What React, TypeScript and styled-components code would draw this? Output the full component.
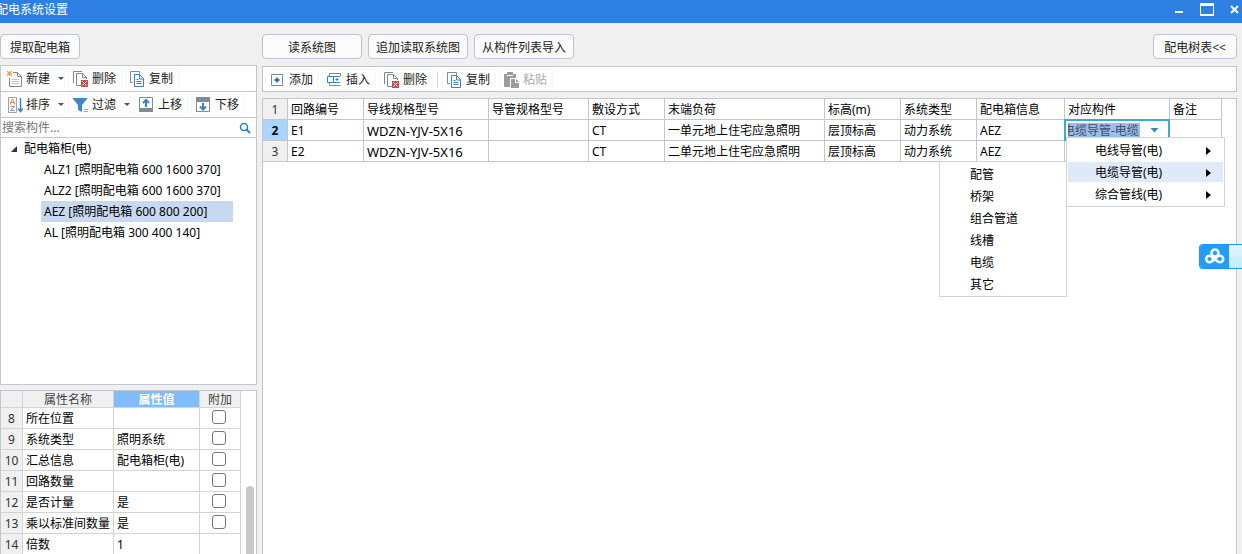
import React from "react";
import styled, { createGlobalStyle, css } from "styled-components";

const line = "#c3c6cc";

const Global = createGlobalStyle`
  * { box-sizing: border-box; }
  body { margin: 0; background: #f0f0f0; }
  body, button, input, table {
    font-family: "Noto Sans", "Noto Sans CJK SC", sans-serif;
    font-size: 12px;
    line-height: 16px;
    color: #000;
  }
`;

const Window = styled.div`
  position: relative;
  display: flex;
  flex-direction: column;
  height: 100vh;
  overflow: hidden;
`;

const TitleBar = styled.header`
  display: flex;
  flex: none;
  justify-content: space-between;
  height: 23px;
  background: #2d80e2;
  color: #fff;
`;

const Title = styled.h1`
  margin: 0;
  font-size: 12px;
  font-weight: 400;
  line-height: 20px;
  text-indent: -4px;
`;

const WindowButtons = styled.div`
  display: flex;
  gap: 8px;
`;

const WindowButton = styled.button`
  width: 20px;
  height: 20px;
  padding: 0;
  border: 0;
  background: none;
  svg { display: block; }
`;

const Body = styled.main`
  display: flex;
  flex: 1;
  gap: 5px;
  min-height: 0;
  padding-right: 5px;
`;

const SideColumn = styled.section`
  display: flex;
  flex: none;
  flex-direction: column;
  width: 257px;
  padding-top: 11px;
`;

const MainColumn = styled.section`
  display: flex;
  flex: 1;
  flex-direction: column;
  min-width: 0;
  padding-top: 11px;
`;

const Actions = styled.div`
  display: flex;
  flex: none;
  gap: 6px;
  height: 25px;
`;

const Spacer = styled.div`
  flex: 1;
`;

const ActionButton = styled.button<{ $width: number }>`
  width: ${(p) => p.$width}px;
  padding: 2px 0 0;
  border: 1px solid #bac4d4;
  border-radius: 4px;
  background: #fbfbfb;
  color: #222;
  white-space: nowrap;
`;

const SidePanel = styled.div`
  display: flex;
  flex: none;
  flex-direction: column;
  height: 320px;
  margin-top: 6px;
  border: 1px solid ${line};
  background: #fff;
`;

const toolRow = css`
  display: flex;
  flex: none;
  align-items: center;
  gap: 3px;
  background: #fff;
`;

const SideTools = styled.div`
  ${toolRow}
  height: 26px;
  padding-left: 1px;
  border-bottom: 1px solid ${line};
`;

const MainTools = styled.div`
  ${toolRow}
  height: 26px;
  margin: 7px 0 6px;
  padding: 2px 0 0 2px;
  border: 1px solid ${line};
`;

const ToolButton = styled.button`
  display: flex;
  align-items: center;
  gap: 3px;
  height: 22px;
  padding: 0 5px 0 4px;
  border: 1px solid #f7f7f7;
  border-radius: 3px;
  background: #fff;
  color: #222;
  white-space: nowrap;
  &:disabled { color: #a9a9a9; }
  svg { flex: none; }
`;

const Caret = styled.span`
  width: 6px;
  height: 3px;
  margin-left: 5px;
  margin-right: -5px;
  background: #555;
  clip-path: polygon(0 0, 100% 0, 50% 100%);
`;

const ToolDivider = styled.span`
  width: 1px;
  height: 16px;
  margin: 0 1px;
  background: #d3d5d9;
`;

const Search = styled.label`
  display: flex;
  flex: none;
  align-items: center;
  height: 20px;
  padding-right: 5px;
  border-bottom: 1px solid ${line};
`;

const SearchInput = styled.input`
  flex: 1;
  min-width: 0;
  padding: 0 0 0 1px;
  border: 0;
  outline: 0;
  background: none;
  &::placeholder { color: #777; opacity: 1; }
`;

const Tree = styled.ul`
  flex: 1;
  margin: 0;
  padding: 0;
  list-style: none;
`;

const TreeGroup = styled.button`
  display: flex;
  align-items: center;
  gap: 7px;
  height: 21px;
  padding: 0 0 0 10px;
  border: 0;
  background: none;
`;

const Branch = styled.ul`
  margin: 0;
  padding: 0 0 0 40px;
  list-style: none;
`;

const Leaf = styled.button<{ $selected: boolean }>`
  display: block;
  width: 192px;
  height: 21px;
  padding: 0 3px;
  border: 0;
  background: ${(p) => (p.$selected ? "#c8d8ef" : "none")};
  text-align: left;
  white-space: nowrap;
`;

const PropertyPanel = styled.div`
  display: flex;
  flex: 1;
  justify-content: space-between;
  min-height: 0;
  margin-top: 5px;
  overflow: hidden;
  border: 1px solid ${line};
  border-bottom: 0;
  background: #fff;
`;

const Sheet = styled.table`
  flex: none;
  align-self: flex-start;
  border-spacing: 0;
  table-layout: fixed;
`;

const Cell = styled.td<{ $tone?: string; $code?: boolean }>`
  height: 21px;
  padding: 2px 3px 0;
  border-right: 1px solid ${(p) => p.$tone || line};
  border-bottom: 1px solid ${(p) => p.$tone || line};
  font-size: ${(p) => (p.$code ? 13 : 12)}px;
  white-space: nowrap;
`;

const RowHead = styled.th<{ $tone?: string; $active?: boolean }>`
  height: 21px;
  padding: 2px 0 0;
  border-right: 1px solid ${(p) => p.$tone || line};
  border-bottom: 1px solid ${(p) => p.$tone || line};
  background: ${(p) => (p.$active ? "#aad5ff" : "#f0f0f0")};
  color: ${(p) => (p.$active ? "#000" : "#333")};
  font-weight: ${(p) => (p.$active ? 700 : 400)};
`;

const ColumnHead = styled.th<{ $active?: boolean }>`
  height: 17px;
  padding: 2px 0 0;
  border-right: 1px solid #d4d4d4;
  border-bottom: 1px solid #d4d4d4;
  background: ${(p) => (p.$active ? "#80bbfa" : "#f0f0f0")};
  color: ${(p) => (p.$active ? "#fff" : "#444")};
  font-weight: ${(p) => (p.$active ? 700 : 400)};
  line-height: 14px;
`;

const CheckCell = styled(Cell)`
  padding: 0 2px 0 0;
  text-align: center;
`;

const Check = styled.input`
  display: block;
  width: 14px;
  height: 14px;
  margin: 0 auto 2px;
  border: 1px solid #777;
  border-radius: 3px;
  background: #fff;
  appearance: none;
`;

const ScrollTrack = styled.div`
  display: flex;
  align-items: flex-end;
  width: 10px;
`;

const ScrollThumb = styled.div`
  width: 8px;
  height: 42%;
  border-radius: 4px 4px 0 0;
  background: #c8c8c8;
`;

const GridPanel = styled.div`
  flex: 1;
  min-height: 0;
  border: 1px solid ${line};
  border-bottom: 0;
  background: #fff;
`;

const ComboCell = styled(Cell)`
  position: relative;
  padding: 0;
`;

const Combo = styled.div`
  position: absolute;
  inset: -1px -1px -1px -1px;
  display: flex;
  align-items: center;
  gap: 10px;
  padding-left: 2px;
  border: 2px solid #3ba9d3;
  background: #fff;
`;

const ComboInput = styled.input`
  width: 72px;
  height: 15px;
  padding: 1px 0 0;
  border: 0;
  background: #9dbdeb;
  color: #444f5e;
  text-indent: -5px;
`;

const ComboArrow = styled.button`
  width: 9px;
  height: 5px;
  padding: 0;
  border: 0;
  background: #3f86b5;
  clip-path: polygon(0 0, 100% 0, 50% 100%);
`;

const Menu = styled.ul`
  position: absolute;
  z-index: 2;
  top: 17px;
  left: 1px;
  display: flex;
  flex-direction: column;
  gap: 2px;
  width: 159px;
  margin: 0;
  padding: 2px 1px;
  border: 1px solid #d3d3d3;
  background: #fff;
  list-style: none;
`;

const SubMenu = styled(Menu)`
  top: 23px;
  right: 100%;
  left: auto;
  width: 128px;
`;

const MenuItem = styled.button<{ $open?: boolean; $indent: number }>`
  display: flex;
  align-items: center;
  justify-content: space-between;
  width: 100%;
  height: 20px;
  padding: 2px 12px 0 ${(p) => p.$indent}px;
  border: 0;
  background: ${(p) => (p.$open ? "#dfe9f8" : "none")};
`;

const FloatingTab = styled.button`
  position: absolute;
  top: 244px;
  right: 0;
  display: flex;
  width: 43px;
  height: 25px;
  padding: 0;
  overflow: hidden;
  border: 1px solid #1e96fb;
  border-right: 0;
  border-radius: 4px 0 0 4px;
  background: linear-gradient(#e3f5ff, #c2eaff);
`;

const TabLogo = styled.span`
  display: grid;
  place-items: center;
  width: 29px;
  height: 100%;
  background: #229dfe;
`;

const Icon = ({ children }: { children: React.ReactNode }) => (
  <svg width="16" height="16" viewBox="0 0 16 16" fill="none" aria-hidden="true">
    {children}
  </svg>
);

const NewIcon = () => (
  <Icon>
    <path d="M6 1.500h4.500l4 4v10h-12V7" stroke="#7f8c96" />
    <path d="M10.500 1v4.500h4" stroke="#7f8c96" />
    <path d="M5 8.500h7M5 10.500h7M5 12.500h7" stroke="#c2c8cd" />
    <path d="M0 0h1v1H0zM2 0h1v1H2zM4 0h1v1H4zM1 1h3v3H1zM0 2h1v1H0zM4 2h1v1H4zM0 4h1v1H0zM2 4h1v1H2zM4 4h1v1H4z" fill="#ee9a2c" />
    <path d="M2 2h1v1H2z" fill="#fff" />
  </Icon>
);

const DeleteIcon = () => (
  <Icon>
    <path d="M8.500 14.500H3.500V2.500h6l4 4V8M9.500 2.500v4h4" stroke="#7f8c96" />
    <path d="M.5 12V.5H9" stroke="#7f8c96" />
    <path d="M8 9h7v7H8z" fill="#d0474c" />
    <path d="M9.500 10.500l4 4M13.500 10.500l-4 4" stroke="#fff" />
  </Icon>
);

const CopyIcon = () => (
  <Icon>
    <path d="M3 11.500H.5V.5h9V3" stroke="#7f8c96" />
    <path d="M4.500 3.500h5l4 4v8h-9z" fill="#fff" stroke="#3a7fc8" />
    <path d="M9.500 4v4h4M6.500 8.500h2M6.500 10.500h5M6.500 12.500h5" stroke="#3a7fc8" />
  </Icon>
);

const SortIcon = () => (
  <Icon>
    <path d="M1.500.5h8v15h-8z" stroke="#9aa4ab" />
    <path d="M3.500 7.500V6l2-4 2 4v1.500M4 5.500h3" stroke="#e2813a" />
    <path d="M3.500 9.500h4l-4 4h4" stroke="#8d979f" />
    <path d="M13.500 1v13M11 11.500l2.500 3 2.500-3" stroke="#3a7fc8" strokeWidth="1.500" />
  </Icon>
);

const FilterIcon = () => (
  <Icon>
    <path d="M0 1h14v1L9 8v7l-4-2V8L0 2z" fill="#3f86d2" />
    <path d="M11 12.500h4M11 14.500h4" stroke="#e9963b" />
  </Icon>
);

const MoveIcon = ({ down }: { down?: boolean }) => (
  <Icon>
    <path d={down ? "M0 0h14v5H0z" : "M0 11h14v4H0z"} fill="#7f8c96" />
    <path d="M.5.5h13v14H.5z" stroke="#7f8c96" />
    <path
      d={down ? "M7 6v6M4 9.500l3 3 3-3" : "M7 10V3.500M4 6l3-3 3 3"}
      stroke="#3a7fc8"
      strokeWidth="2"
    />
  </Icon>
);

const AddIcon = () => (
  <Icon>
    <path d="M1.500 2.500h11v11h-11z" stroke="#7f8c96" />
    <path d="M7 5.500v5M4.500 8h5" stroke="#2f6fba" strokeWidth="2" />
  </Icon>
);

const InsertIcon = () => (
  <Icon>
    <path d="M2.500 4V1.500h11V4M2.500 11v2.500h11" stroke="#7f8c96" />
    <path d="M.5 4.500h6v6h-6zM6.500 4.500H13M6.500 10.500H13" stroke="#3a7fc8" />
    <path d="M10 6v3M8.500 7.500h3" stroke="#3a7fc8" />
  </Icon>
);

const PasteIcon = () => (
  <Icon>
    <path d="M0 2h3V0h6v2h3v4H6v9H0z" fill="#9c9c9c" />
    <path d="M3 3.500h6" stroke="#fff" />
    <path d="M7 7h5l3 3v6H7z" fill="#9c9c9c" />
    <path d="M11.500 7v3.500H15" stroke="#fff" />
  </Icon>
);

const SubArrow = () => (
  <svg width="5" height="8" viewBox="0 0 5 8" aria-hidden="true">
    <path d="M0 0l5 4-5 4z" fill="#000" />
  </svg>
);

const circuits = [
  ["回路编号", "导线规格型号", "导管规格型号", "敷设方式", "末端负荷", "标高(m)", "系统类型", "配电箱信息", "对应构件", "备注"],
  ["E1", "WDZN-YJV-5X16", "", "CT", "一单元地上住宅应急照明", "层顶标高", "动力系统", "AEZ", "", ""],
  ["E2", "WDZN-YJV-5X16", "", "CT", "二单元地上住宅应急照明", "层顶标高", "动力系统", "AEZ", "", ""],
];
const circuitWidths = [25, 76, 125, 100, 76, 160, 76, 76, 88, 105, 52];

const properties: [number, string, string, boolean][] = [
  [8, "所在位置", "", true],
  [9, "系统类型", "照明系统", true],
  [10, "汇总信息", "配电箱柜(电)", true],
  [11, "回路数量", "", true],
  [12, "是否计量", "是", true],
  [13, "乘以标准间数量", "是", true],
  [14, "倍数", "1", false],
];
const propertyWidths = [22, 91, 86, 41];

const boxes = [
  "ALZ1 [照明配电箱 600 1600 370]",
  "ALZ2 [照明配电箱 600 1600 370]",
  "AEZ [照明配电箱 600 800 200]",
  "AL [照明配电箱 300 400 140]",
];

const Columns = ({ widths }: { widths: number[] }) => (
  <colgroup>
    {widths.map((w, i) => (
      <col key={i} width={w} />
    ))}
  </colgroup>
);

const CircuitSheet = styled(Sheet)`
  width: 959px;
`;

const PropertySheet = styled(Sheet)`
  width: 240px;
`;

const ComponentPicker = () => (
  <>
    <Combo>
      <ComboInput role="combobox" aria-expanded="true" aria-label="对应构件" defaultValue="电缆导管-电缆" />
      <ComboArrow aria-label="展开" />
    </Combo>
    <Menu>
      <li>
        <MenuItem $indent={27}>电线导管(电)<SubArrow /></MenuItem>
      </li>
      <li>
        <MenuItem $indent={27} $open>电缆导管(电)<SubArrow /></MenuItem>
        <SubMenu>
          {["配管", "桥架", "组合管道", "线槽", "电缆", "其它"].map((name) => (
            <li key={name}>
              <MenuItem $indent={29}>{name}</MenuItem>
            </li>
          ))}
        </SubMenu>
      </li>
      <li>
        <MenuItem $indent={27}>综合管线(电)<SubArrow /></MenuItem>
      </li>
    </Menu>
  </>
);

export default function App() {
  return (
    <Window>
      <Global />
      <TitleBar>
        <Title>配电系统设置</Title>
        <WindowButtons>
          <WindowButton aria-label="最小化">
            <svg width="20" height="20"><path d="M9 11h8v2H9z" fill="#fff" /></svg>
          </WindowButton>
          <WindowButton aria-label="最大化">
            <svg width="20" height="20"><path d="M6 3h14v13H6zM7 6v8h12V6z" fill="#fff" fillRule="evenodd" /></svg>
          </WindowButton>
          <WindowButton aria-label="关闭">
            <svg width="20" height="20"><path d="M9 6l7 7M16 6l-7 7" stroke="#fff" strokeWidth="2" /></svg>
          </WindowButton>
        </WindowButtons>
      </TitleBar>
      <Body>
        <SideColumn>
          <Actions>
            <ActionButton $width={80}>提取配电箱</ActionButton>
          </Actions>
          <SidePanel>
            <SideTools>
              <ToolButton><NewIcon />新建<Caret /></ToolButton>
              <ToolButton><DeleteIcon />删除</ToolButton>
              <ToolButton><CopyIcon />复制</ToolButton>
            </SideTools>
            <SideTools>
              <ToolButton><SortIcon />排序<Caret /></ToolButton>
              <ToolButton><FilterIcon />过滤<Caret /></ToolButton>
              <ToolButton><MoveIcon />上移</ToolButton>
              <ToolButton><MoveIcon down />下移</ToolButton>
            </SideTools>
            <Search>
              <SearchInput placeholder="搜索构件..." aria-label="搜索构件" />
              <svg width="12" height="12" viewBox="0 0 12 12" fill="none" stroke="#2b83ba" aria-hidden="true">
                <circle cx="5" cy="5" r="3.500" strokeWidth="1.500" />
                <path d="M7.500 7.500l3.500 3.500" strokeWidth="2" />
              </svg>
            </Search>
            <Tree>
              <li>
                <TreeGroup>
                  <svg width="6" height="6" aria-hidden="true"><path d="M6 0v6H0z" fill="#333" /></svg>
                  配电箱柜(电)
                </TreeGroup>
                <Branch>
                  {boxes.map((name, i) => (
                    <li key={name}>
                      <Leaf $selected={i === 2}>{name}</Leaf>
                    </li>
                  ))}
                </Branch>
              </li>
            </Tree>
          </SidePanel>
          <PropertyPanel>
            <PropertySheet>
              <Columns widths={propertyWidths} />
              <thead>
                <tr>
                  <ColumnHead />
                  <ColumnHead>属性名称</ColumnHead>
                  <ColumnHead $active>属性值</ColumnHead>
                  <ColumnHead>附加</ColumnHead>
                </tr>
              </thead>
              <tbody>
                {properties.map(([no, name, value, extra]) => (
                  <tr key={no}>
                    <RowHead $tone="#d4d4d4">{no}</RowHead>
                    <Cell $tone="#d4d4d4">{name}</Cell>
                    <Cell $tone="#d4d4d4">{value}</Cell>
                    <CheckCell $tone="#d4d4d4">
                      {extra && <Check type="checkbox" aria-label={name} />}
                    </CheckCell>
                  </tr>
                ))}
              </tbody>
            </PropertySheet>
            <ScrollTrack>
              <ScrollThumb />
            </ScrollTrack>
          </PropertyPanel>
        </SideColumn>
        <MainColumn>
          <Actions>
            <ActionButton $width={100}>读系统图</ActionButton>
            <ActionButton $width={100}>追加读取系统图</ActionButton>
            <ActionButton $width={100}>从构件列表导入</ActionButton>
            <Spacer />
            <ActionButton $width={84}>配电树表&lt;&lt;</ActionButton>
          </Actions>
          <MainTools>
            <ToolButton><AddIcon />添加</ToolButton>
            <ToolButton><InsertIcon />插入</ToolButton>
            <ToolButton><DeleteIcon />删除</ToolButton>
            <ToolDivider />
            <ToolButton><CopyIcon />复制</ToolButton>
            <ToolButton disabled><PasteIcon />粘贴</ToolButton>
          </MainTools>
          <GridPanel>
            <CircuitSheet>
              <Columns widths={circuitWidths} />
              <tbody>
                {circuits.map((row, r) => (
                  <tr key={r}>
                    <RowHead $active={r === 1}>{r + 1}</RowHead>
                    {row.map((text, c) =>
                      r === 1 && c === 8 ? (
                        <ComboCell key={c}><ComponentPicker /></ComboCell>
                      ) : (
                        <Cell key={c} $code={r > 0 && c === 1}>{text}</Cell>
                      )
                    )}
                  </tr>
                ))}
              </tbody>
            </CircuitSheet>
          </GridPanel>
        </MainColumn>
      </Body>
      <FloatingTab aria-label="网盘">
        <TabLogo>
          <svg width="20" height="18" viewBox="0 0 20 18" fill="none" stroke="#fff" strokeWidth="2.500" aria-hidden="true">
            <circle cx="10" cy="5" r="3.500" />
            <circle cx="4.500" cy="11" r="3.300" />
            <path d="M7 13.500l5.500-5M12.500 13.200a3.300 3.300 0 1 0 .2-4.700M7 8.500l5.500 5" />
          </svg>
        </TabLogo>
      </FloatingTab>
    </Window>
  );
}
